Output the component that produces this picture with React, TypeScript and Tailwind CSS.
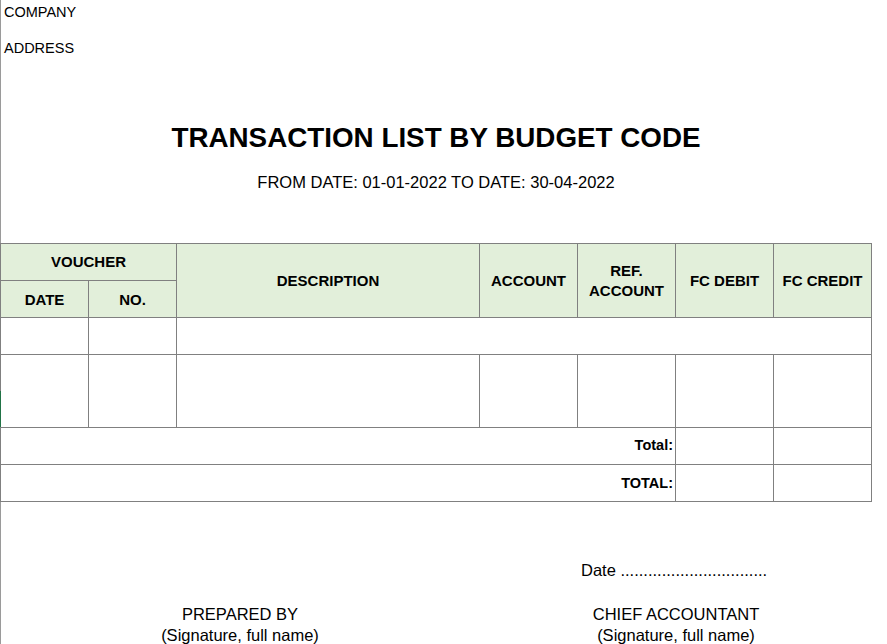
import React from "react";

const head = "flex items-center justify-center bg-[#e2efda] text-center text-[15px] font-bold leading-[20px] text-black";
const cell = "bg-white";

export default function App() {
  return (
    <div
      className="h-[644px] w-[887px] overflow-hidden bg-white text-black shadow-[inset_1px_0_0_#9a9a9a]"
      style={{ fontFamily: '"Liberation Sans", Arial, sans-serif' }}
    >
      <div className="w-[872px]">
        {/* Company / address */}
        <div className="pl-[4px] text-[14.5px]">
          <div className="h-[24px] leading-[24px]">COMPANY</div>
          <div className="mt-[12px] h-[24px] leading-[24px]">ADDRESS</div>
        </div>

        {/* Title */}
        <h1 className="mt-[60px] h-[36px] text-center text-[27.8px] font-bold leading-[36px]">
          TRANSACTION LIST BY BUDGET CODE
        </h1>
        <p className="mt-[14px] h-[24px] text-center text-[16.5px] leading-[24px]">
          FROM DATE: 01-01-2022 TO DATE: 30-04-2022
        </p>

        {/* Table */}
        <div className="mt-[49px] grid grid-cols-[87px_87px_302px_97px_97px_97px_97px] grid-rows-[36px_36px_36px_72px_36px_36px] gap-px bg-[#808080] p-px">
          <div className={`${head} col-span-2`}>VOUCHER</div>
          <div className={`${head} row-span-2`}>DESCRIPTION</div>
          <div className={`${head} row-span-2`}>ACCOUNT</div>
          <div className={`${head} row-span-2`}>
            REF.
            <br />
            ACCOUNT
          </div>
          <div className={`${head} row-span-2`}>FC DEBIT</div>
          <div className={`${head} row-span-2`}>FC CREDIT</div>
          <div className={`${head} pt-[2px]`}>DATE</div>
          <div className={`${head} pt-[2px]`}>NO.</div>

          <div className={cell} />
          <div className={cell} />
          <div className={`${cell} col-span-5`} />

          <div className={`${cell} relative`}>
            <div className="absolute -left-px bottom-0 h-[36px] w-px bg-[#217346]" />
          </div>
          <div className={cell} />
          <div className={cell} />
          <div className={cell} />
          <div className={cell} />
          <div className={cell} />
          <div className={cell} />

          <div className={`${cell} col-span-5 flex items-center justify-end pr-[2px] text-[14.5px] font-bold`}>
            Total:
          </div>
          <div className={cell} />
          <div className={cell} />

          <div className={`${cell} col-span-5 flex items-center justify-end pr-[2px] pt-[2px] text-[14.5px] font-bold`}>
            TOTAL:
          </div>
          <div className={cell} />
          <div className={cell} />
        </div>

        {/* Signatures */}
        <div className="mt-[56px] flex text-[16.5px]">
          <div className="w-[480px] pt-[46px] text-center leading-[21px]">
            <div>PREPARED BY</div>
            <div>(Signature, full name)</div>
          </div>
          <div className="w-[392px]">
            <div className="h-[24px] pl-[101px] leading-[24px]">
              Date ................................
            </div>
            <div className="mt-[22px] text-center leading-[21px]">
              <div>CHIEF ACCOUNTANT</div>
              <div>(Signature, full name)</div>
            </div>
          </div>
        </div>
      </div>
    </div>
  );
}
